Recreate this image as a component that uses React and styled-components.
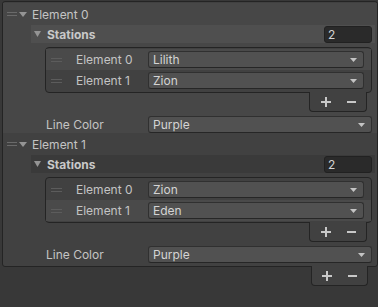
import React from 'react';
import styled, { createGlobalStyle } from 'styled-components';

const Global = createGlobalStyle`
  html, body { margin: 0; padding: 0; background: #383838; }
  body {
    font-family: Inter, "Noto Sans", sans-serif;
    font-size: 12px;
    color: #c4c4c4;
    width: 378px;
    height: 307px;
    overflow: hidden;
  }
`;

const Page = styled.div`
  padding: 1px 0 0 2px;
  width: 376px;
  display: flex;
  flex-direction: column;
`;

const OuterList = styled.div`
  background: #414141;
  border: 1px solid #242424;
  border-radius: 3px;
  padding: 1px 0 3px;
  display: flex;
  flex-direction: column;
`;

const Section = styled.div`
  background: ${(p) => (p.$hl ? '#474747' : 'transparent')};
  display: flex;
  flex-direction: column;
`;

const ElementHeader = styled.div`
  height: 22px;
  display: flex;
  align-items: center;
  padding-left: 4px;
`;

const Handle = styled.span`
  width: ${(p) => p.$w || 10}px;
  height: 4px;
  border-top: 1px solid ${(p) => p.$c || '#6a6a6a'};
  border-bottom: 1px solid ${(p) => p.$c || '#6a6a6a'};
  box-sizing: border-box;
  flex: none;
`;

const Foldout = styled.svg`
  flex: none;
  margin: ${(p) => p.$m};
`;

const Label = styled.span`
  white-space: nowrap;
  font-weight: ${(p) => (p.$bold ? 700 : 400)};
  color: ${(p) => (p.$bold ? '#c8c8c8' : '#c4c4c4')};
`;

const StationsHeader = styled.div`
  height: 18px;
  margin: 0 2px 0 28px;
  background: ${(p) => (p.$hl ? '#4f4f4f' : '#3a3a3a')};
  display: flex;
  align-items: center;
  padding-left: 3px;
`;

const IntField = styled.div`
  margin-left: auto;
  margin-right: 3px;
  width: 48px;
  height: 17px;
  box-sizing: border-box;
  background: #2a2a2a;
  border: 1px solid #212121;
  border-radius: 3px;
  padding-left: 3px;
  display: flex;
  align-items: center;
  color: #d2d2d2;
`;

const InnerList = styled.div`
  margin: 4px 5px 0 42px;
  border: 1px solid #242424;
  border-radius: 4px;
  background: #414141;
  padding: 1px 0 1px;
  display: flex;
  flex-direction: column;
`;

const Row = styled.div`
  height: 21px;
  display: flex;
  align-items: center;
  background: ${(p) => (p.$hl ? '#4a4a4a' : 'transparent')};
`;

const RowHandle = styled.div`
  width: 30px;
  padding-left: 5px;
  box-sizing: border-box;
  display: flex;
  flex: none;
`;

const RowLabel = styled.span`
  width: 72px;
  flex: none;
  white-space: nowrap;
`;

const Dropdown = styled.div`
  flex: 1;
  height: 17px;
  box-sizing: border-box;
  margin-right: ${(p) => p.$mr || 0}px;
  background: #515151;
  border: 1px solid #303030;
  border-bottom-color: #262626;
  border-radius: 3px;
  padding: 0 0 0 4px;
  display: flex;
  align-items: center;
  color: #d4d4d4;
`;

const DropArrow = styled.svg`
  margin-left: auto;
  margin-right: 6px;
  flex: none;
`;

const Footer = styled.div`
  align-self: flex-end;
  width: ${(p) => p.$w}px;
  height: 20px;
  box-sizing: border-box;
  margin: -1px ${(p) => p.$mr}px 0 0;
  background: #414141;
  border: 1px solid #242424;
  border-top: none;
  border-radius: 0 0 4px 4px;
  position: relative;
  display: flex;
  align-items: center;
  padding-left: ${(p) => p.$pl}px;
  gap: 16px;
`;

const FieldRow = styled.div`
  height: 17px;
  margin: 4px 5px 0 43px;
  display: flex;
  align-items: center;
`;

const FieldLabel = styled.span`
  width: 102px;
  flex: none;
  white-space: nowrap;
`;

function Tri({ w, h, m }) {
  return (
    <Foldout width={w} height={h} viewBox={`0 0 ${w} ${h}`} $m={m}>
      <polygon points={`0,0 ${w},0 ${w / 2},${h}`} fill="#949494" />
    </Foldout>
  );
}

function Arrow() {
  return (
    <DropArrow width="7" height="4" viewBox="0 0 7 4">
      <polygon points="0,0 7,0 3.5,4" fill="#c4c4c4" />
    </DropArrow>
  );
}

function PlusMinus() {
  return (
    <>
      <svg width="10" height="10" viewBox="0 0 10 10">
        <rect x="4" y="0" width="2" height="10" fill="#c8c8c8" />
        <rect x="0" y="4" width="10" height="2" fill="#c8c8c8" />
      </svg>
      <svg width="9" height="10" viewBox="0 0 9 10">
        <rect x="0" y="4" width="9" height="2" fill="#c8c8c8" />
      </svg>
    </>
  );
}

const data = [
  { name: 'Element 0', stations: ['Lilith', 'Zion'], color: 'Purple', hl: true, row: 0 },
  { name: 'Element 1', stations: ['Zion', 'Eden'], color: 'Purple', hl: false, row: 1 },
];

export default function App() {
  return (
    <>
      <Global />
      <Page>
        <OuterList>
          {data.map((el) => (
            <Section key={el.name} $hl={el.hl}>
              <ElementHeader>
                <Handle $w={10} />
                <Tri w={8} h={5} m="0 5px 0 2px" />
                <Label>{el.name}</Label>
              </ElementHeader>
              <StationsHeader $hl={el.hl}>
                <Tri w={7} h={6} m="0 6px 0 0" />
                <Label $bold>Stations</Label>
                <IntField>{el.stations.length}</IntField>
              </StationsHeader>
              <InnerList>
                {el.stations.map((s, i) => (
                  <Row key={i} $hl={i === el.row}>
                    <RowHandle>
                      <Handle $w={11} $c="#5c5c5c" />
                    </RowHandle>
                    <RowLabel>Element {i}</RowLabel>
                    <Dropdown $mr={7}>
                      {s}
                      <Arrow />
                    </Dropdown>
                  </Row>
                ))}
              </InnerList>
              <Footer $w={58} $mr={10} $pl={11}>
                <PlusMinus />
              </Footer>
              <FieldRow>
                <FieldLabel>Line Color</FieldLabel>
                <Dropdown>
                  {el.color}
                  <Arrow />
                </Dropdown>
              </FieldRow>
            </Section>
          ))}
        </OuterList>
        <Footer $w={57} $mr={10} $pl={10}>
          <PlusMinus />
        </Footer>
      </Page>
    </>
  );
}
